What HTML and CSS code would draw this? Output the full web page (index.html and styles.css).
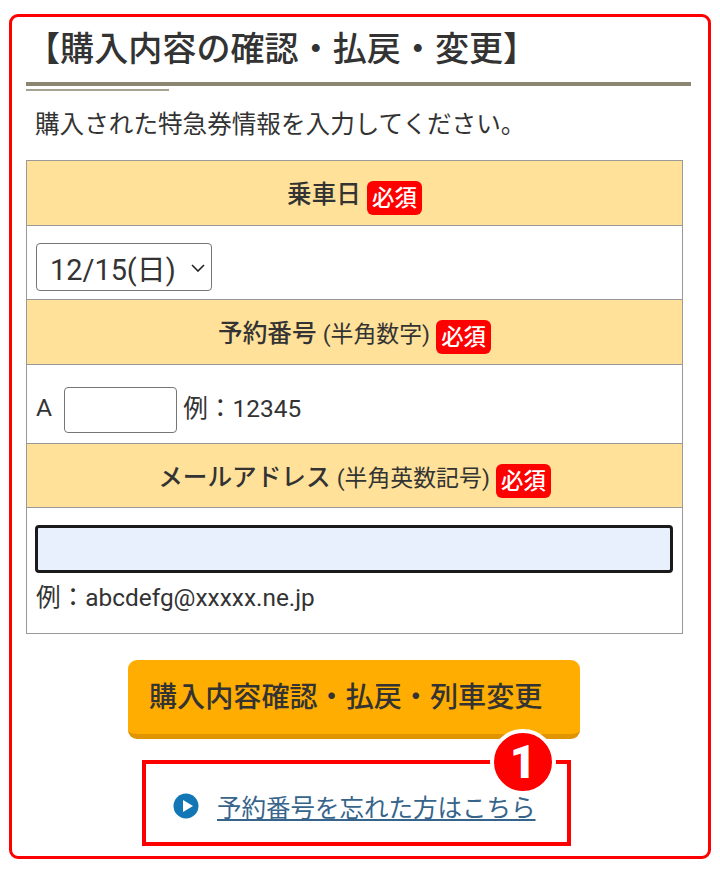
FILE: index.html
```html
<!DOCTYPE html>
<html lang="ja">
<head>
    <meta charset="UTF-8">
    <title>購入内容の確認・払戻・変更</title>
    <link rel="stylesheet" href="styles.css">
</head>
<body>
    <div class="panel">
        <h2 class="title">【購入内容の確認・払戻・変更】</h2>
        <p class="intro">購入された特急券情報を入力してください。</p>

        <table class="form-table">
            <tr>
                <th>乗車日 <span class="req">必須</span></th>
            </tr>
            <tr>
                <td class="cell-date">
                    <div class="select-box">
                        <span>12/15(日)</span>
                        <svg class="chevron" width="14" height="8" viewBox="0 0 14 8"><path d="M1 1L7 7L13 1" fill="none" stroke="#222" stroke-width="1.6"/></svg>
                    </div>
                </td>
            </tr>
            <tr>
                <th>予約番号 <small>(半角数字)</small> <span class="req">必須</span></th>
            </tr>
            <tr>
                <td class="cell-number">
                    <span class="prefix">A</span>
                    <input class="input-number" type="text">
                    <span class="hint">例：<span class="latin">12345</span></span>
                </td>
            </tr>
            <tr>
                <th class="th-mail">メールアドレス <small>(半角英数記号)</small> <span class="req">必須</span></th>
            </tr>
            <tr>
                <td class="cell-mail">
                    <input class="input-mail" type="text">
                    <div class="hint hint-mail">例：<span class="latin">abcdefg@xxxxx.ne.jp</span></div>
                </td>
            </tr>
        </table>

        <div class="actions">
            <button class="submit" type="button">購入内容確認・払戻・列車変更</button>
        </div>

        <div class="forgot">
            <svg class="play" width="26" height="26" viewBox="0 0 26 26"><circle cx="13" cy="13" r="12.5" fill="#1277b4"/><path d="M10 7L20 13L10 19Z" fill="#fff"/></svg>
            <a href="#">予約番号を忘れた方はこちら</a>
            <span class="badge">1</span>
        </div>
    </div>
</body>
</html>
```

FILE: styles.css
```css
* { box-sizing: border-box; }
html, body { margin: 0; padding: 0; }
body { font-family: Roboto, "Noto Sans CJK JP", sans-serif; color: #333; background: #fff; }

.panel { width: 702px; height: 845px; margin: 14px 0 0 9px; padding: 0 17px 0 14px; border: 3px solid #f00; border-radius: 9px; }

.title { height: 69px; margin: 0; padding: 8px 0 0 0; font-size: 34.1px; line-height: 48px; font-weight: 500; border-bottom: 4px solid #8a8672; position: relative; }
.title::after { content: ""; position: absolute; left: 0; bottom: -9px; width: 143px; height: 2px; background: #a5a290; }

.intro { margin: 0; padding: 21px 0 0 9px; font-size: 24.6px; line-height: 36px; height: 74px; }

.form-table { width: 654px; border-collapse: collapse; }
.form-table th, .form-table td { border: 1px solid #999; padding: 0; }
.form-table th { height: 65px; padding-top: 3px; background: #ffe199; font-size: 24.64px; font-weight: 500; text-align: center; }
.form-table .th-mail { height: 64px; }
.form-table small { font-size: 22.9px; font-weight: 400; }

.req { display: inline-block; padding: 0 5px; background: #f00; color: #fff; font-size: 22.4px; line-height: 34px; border-radius: 6px; vertical-align: -3px; }

.form-table .cell-date { height: 74px; padding: 8px 9px 0; }
.select-box { display: inline-flex; align-items: center; width: 176px; height: 48px; padding-left: 13px; border: 1px solid #767676; border-radius: 4px; font-size: 28.9px; color: #333; }
.chevron { margin-left: 15px; margin-top: 2px; }

.form-table .cell-number { height: 79px; padding: 11px 9px 0; font-size: 24.64px; }
.prefix { margin-right: 6px; }
.input-number { width: 113px; height: 46px; border: 1px solid #767676; border-radius: 4px; background: #fff; vertical-align: middle; }

.hint { font-size: 24.64px; }
.latin { font-size: 24.4px; }

.form-table .cell-mail { height: 126px; padding: 0 9px; vertical-align: top; }
.input-mail { display: block; width: 638px; height: 48px; margin: 17px 0 0 -1px; border: 3px solid #1a1a1a; border-radius: 4px; background: #e8f0fe; }
.hint-mail { margin-top: 7px; line-height: 36px; }

.actions { padding: 26px 0 0 102px; }
.submit { display: block; width: 452px; height: 79px; padding: 0 0 6px 21px; border: 0; border-bottom: 5px solid #df9400; border-radius: 9px; background: #ffad00; color: #333; font-family: inherit; font-size: 28.1px; font-weight: 500; text-align: left; }

.forgot { position: relative; display: flex; align-items: center; width: 429px; height: 86px; margin: 21px 0 0 116px; padding: 6px 0 0 27px; border: 4px solid #f00; }
.play { margin-right: 18px; }
.forgot a { color: #36648b; font-size: 24.5px; }
.badge { position: absolute; top: -35px; right: 11px; width: 66px; height: 66px; border: 4px solid #fff; border-radius: 50%; background: #f00; color: #fff; font-size: 46px; font-weight: 900; line-height: 58px; text-align: center; }
```
